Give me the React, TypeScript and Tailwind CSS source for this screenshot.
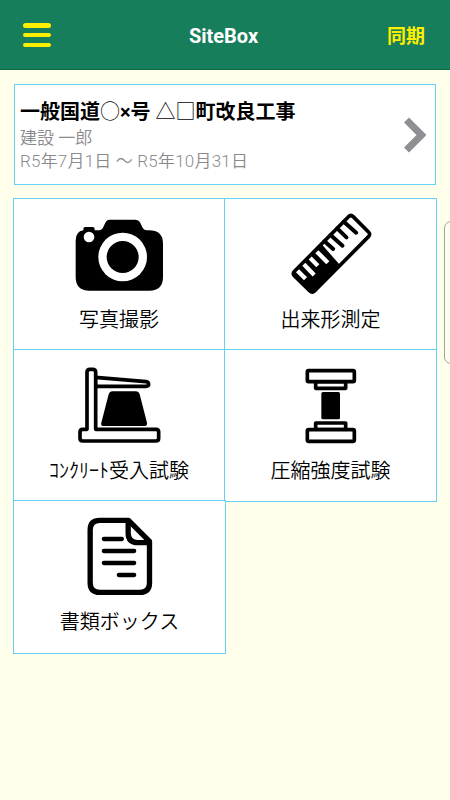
import type { ReactNode } from "react";

function CameraIcon() {
  return (
    <svg className="block h-[90px] w-[120px]" viewBox="-3 0 360 270">
      <path
        d="M70 76V72Q70 66 76 66H98Q104 66 104 72V76H116Q127 76 131 64L136 53Q140 44 149 44H226Q236 44 240 52L247 67Q251 76 261 76H266Q309 76 309 116V216Q309 257 268 257H88Q47 257 47 216V106Q47 80 70 76Z"
        fill="#000"
      />
      <circle cx="87" cy="96" r="16" fill="#fff" />
      <circle cx="188" cy="156" r="73" fill="#fff" />
      <circle cx="188" cy="156" r="48" fill="#000" />
    </svg>
  );
}

function RulerIcon() {
  return (
    <svg className="block h-[90px] w-[120px]" viewBox="1.5 0 360 270">
      <path
        d="M234 35Q241 28 248 35L294 81Q301 88 294 95L132 258Q125 265 118 258L72 213Q65 206 72 199Z"
        fill="#fff"
        stroke="#000"
        strokeWidth="11"
        strokeLinejoin="round"
      />
      <path d="M153 117L209 181L130 260Q125 264 119 258L72 212Q66 206 72 200Z" fill="#000" />
      <path d="M81 197L105 221M100 178L131 210M119 159L142 182M139 140L172 173" stroke="#fff" strokeWidth="13" />
      <path d="M162 109L188 132M180 90L216 122M200 70L228 97M220 50L257 83" stroke="#000" strokeWidth="12" strokeLinecap="round" />
    </svg>
  );
}

function ConcreteIcon() {
  return (
    <svg className="block h-[90px] w-[160px]" viewBox="-3 3 480 270">
      <g fill="#fff" stroke="#000" strokeWidth="11" strokeLinejoin="round">
        <path d="M166 67L318 80Q326 81 326 88Q326 94 318 94H166Z" />
        <path d="M141 52Q141 43 150 43H158Q167 43 167 52V223H348Q356 223 356 231V250Q356 258 348 258H128Q120 258 120 250V231Q120 223 128 223H141Z" />
      </g>
      <path
        d="M217 109H287Q296 109 299 118L321 203Q323 213 312 213H192Q181 213 184 203L206 118Q209 109 217 109Z"
        fill="#000"
      />
    </svg>
  );
}

function CompressionIcon() {
  return (
    <svg className="block h-[90px] w-[140px]" viewBox="3 3 420 270">
      <g fill="#fff" stroke="#000" strokeWidth="11" strokeLinejoin="round">
        <rect x="167" y="80" width="90" height="20" />
        <rect x="142" y="47" width="141" height="33" rx="4" />
        <rect x="167" y="204" width="90" height="20" />
        <rect x="142" y="224" width="141" height="35" rx="4" />
      </g>
      <rect x="184" y="111" width="56" height="82" rx="5" fill="#000" />
    </svg>
  );
}

function DocumentIcon() {
  return (
    <svg className="block h-[90px] w-[140px]" viewBox="-1.5 6 420 270">
      <g fill="none" stroke="#000" strokeWidth="16" strokeLinejoin="round">
        <path d="M234 46H148Q119 46 119 75V233Q119 262 148 262H268Q297 262 297 233V109Z" />
        <path d="M233 50V84Q233 113 262 113H295" />
      </g>
      <path d="M160 102H214M160 138H251M160 174H251M205 210H251" stroke="#000" strokeWidth="13" strokeLinecap="round" />
    </svg>
  );
}

function Tile({ label, className, children }: { label: string; className: string; children: ReactNode }) {
  return (
    <button className={`flex flex-col items-center border border-[#63d3f2] bg-white pt-1.5 ${className}`}>
      {children}
      <span className="mt-2.5 text-[20px] leading-[30px] font-[350] whitespace-nowrap text-black">{label}</span>
    </button>
  );
}

export default function App() {
  return (
    <div className="flex h-[800px] w-[450px] flex-col overflow-hidden bg-[#ffffec] font-[Roboto,'Noto_Sans_CJK_JP',sans-serif]">
      <header className="grid h-[70px] shrink-0 grid-cols-3 items-center border-b border-[#08703f] bg-[#167e5a] pt-[5px] pr-[25px] pl-[23px]">
        <button aria-label="メニュー" className="mb-1 flex h-6 w-7 flex-col justify-between">
          <span className="h-[4.5px] rounded-full bg-[#ffee00]" />
          <span className="h-[4.5px] rounded-full bg-[#ffee00]" />
          <span className="h-[4.5px] rounded-full bg-[#ffee00]" />
        </button>
        <h1 className="pr-px pb-0.5 text-center text-[20px] font-bold text-white">SiteBox</h1>
        <button className="text-right text-[19px] font-bold text-[#ffee00]">同期</button>
      </header>

      <section className="mt-3.5 ml-3.5 flex h-[101px] w-[422px] shrink-0 items-center justify-between border border-[#63d3f2] bg-white pr-[9px] pl-[5px]">
        <div className="pt-0.5 whitespace-nowrap">
          <h2 className="text-[20px] leading-[28px] font-bold text-black">
            一般国道<span className="font-light">○</span>×号 <span className="font-[350]">△□</span>町改良工事
          </h2>
          <p className="text-[17px] leading-[24px] font-[350] text-[#8a8a8e]">建設 一郎</p>
          <p className="text-[17px] leading-[23px] font-[350] tracking-[0.2px] text-[#8a8a8e]">R5年7月1日 〜 R5年10月31日</p>
        </div>
        <svg className="h-9 w-[22px]" viewBox="0 0 22 36">
          <path d="M2.5 3L17.5 18L2.5 33" fill="none" stroke="#8e8e93" strokeWidth="7" />
        </svg>
      </section>

      <main className="mt-[13px] ml-[13px] flex w-[424px] flex-col">
        <div className="flex">
          <Tile label="写真撮影" className="h-[152px] w-[212px]">
            <CameraIcon />
          </Tile>
          <Tile label="出来形測定" className="-ml-px h-[152px] w-[213px]">
            <RulerIcon />
          </Tile>
        </div>
        <div className="-mt-px flex">
          <Tile label="ｺﾝｸﾘｰﾄ受入試験" className="h-[152px] w-[212px]">
            <ConcreteIcon />
          </Tile>
          <Tile label="圧縮強度試験" className="-ml-px h-[153px] w-[213px]">
            <CompressionIcon />
          </Tile>
        </div>
        <Tile label="書類ボックス" className="-mt-0.5 h-[154px] w-[213px]">
          <DocumentIcon />
        </Tile>
      </main>

      <div className="absolute top-[221px] left-[444px] h-[143px] w-1.5 overflow-hidden">
        <div className="h-full w-5 rounded-[7px] border border-[#a3a39b] bg-[#ffffec]" />
      </div>
    </div>
  );
}
